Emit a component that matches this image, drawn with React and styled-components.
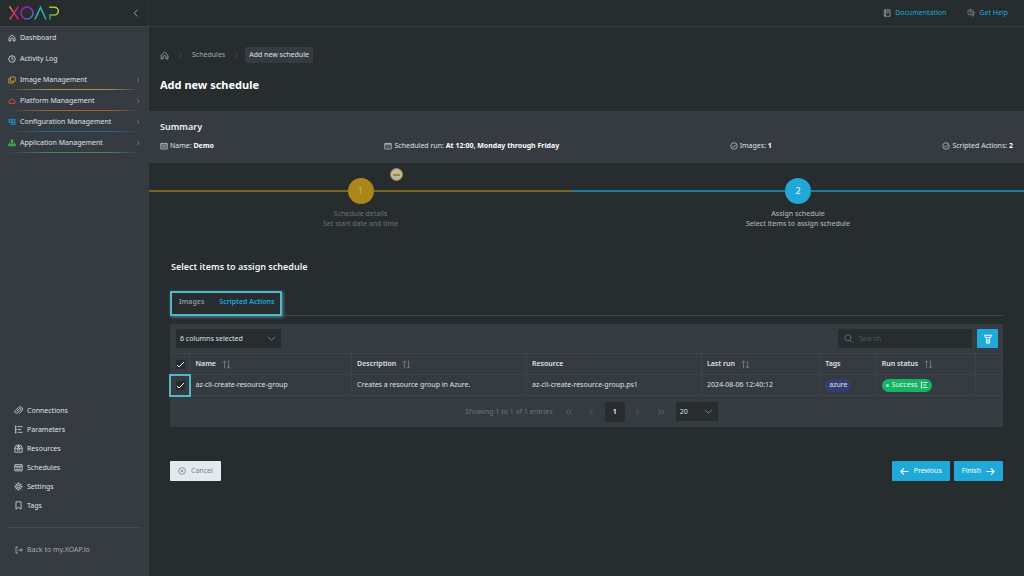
import React from "react";
import styled, { createGlobalStyle } from "styled-components";

const c = {
  bg: "#272c2f",
  panel: "#353b41",
  line: "#3f464c",
  text: "#dee2e6",
  muted: "#8b9298",
  dim: "#6c757d",
  blue: "#20a8d8",
  gold: "#ab8618",
  ring: "#4fb9c9",
};

const GlobalStyle = createGlobalStyle`
  * { box-sizing: border-box; }
  body {
    margin: 0;
    background: ${c.bg};
    color: ${c.text};
    font: 7px/10px "Noto Sans", "Open Sans", sans-serif;
  }
  button, input, select { font: inherit; color: inherit; border: 0; margin: 0; }
  button { cursor: pointer; }
  a { color: inherit; text-decoration: none; }
  svg { display: block; flex: none; }
`;

const Layout = styled.div`
  display: grid;
  grid-template-columns: 149px minmax(0, 1fr);
  min-height: 100vh;
`;

const Sidebar = styled.aside`
  display: flex;
  flex-direction: column;
  background: ${c.panel};
`;

const Brand = styled.div`
  display: flex;
  align-items: center;
  justify-content: space-between;
  height: 27px;
  padding: 0 9px;
  background: ${c.bg};
  border-bottom: 1px solid ${c.line};
  border-right: 1px solid #30353a;
`;

const IconButton = styled.button`
  display: grid;
  place-items: center;
  width: 8px;
  padding: 0;
  background: none;
  color: #7f9fb0;
`;

const Nav = styled.nav`
  display: flex;
  flex-direction: column;
  padding: 0 8px;
`;

const NavLink = styled.a`
  position: relative;
  display: flex;
  align-items: center;
  gap: 4px;
  height: 21px;
  & > svg:first-child { color: ${(p) => p.$tint || "#ced4da"}; }
  & > svg:last-child { color: #6f8c9c; }
  &::after {
    content: "";
    position: absolute;
    inset: auto 0 0 0;
    height: 1px;
    background: ${(p) =>
      p.$glow ? `linear-gradient(90deg, transparent, ${p.$glow} 30% 75%, transparent)` : "none"};
  }
`;

const NavLabel = styled.span`
  flex: 1;
`;

const LowerNav = styled(Nav)`
  margin-top: auto;
  padding: 0 15px 12px 14px;
`;

const LowerLink = styled.a`
  display: flex;
  align-items: center;
  gap: 4px;
  height: 19px;
  & > svg { color: #ced4da; }
`;

const BackLink = styled.a`
  display: flex;
  align-items: center;
  gap: 4px;
  margin: 0 8px;
  padding: 17px 7px 21px;
  border-top: 1px solid #444c53;
  color: #a3a9af;
`;

const Main = styled.main`
  display: flex;
  flex-direction: column;
`;

const TopBar = styled.header`
  display: flex;
  align-items: center;
  justify-content: flex-end;
  gap: 21px;
  height: 27px;
  padding-right: 16px;
  border-bottom: 1px solid #353b40;
`;

const TopLink = styled.a`
  display: flex;
  align-items: center;
  gap: 4px;
  color: ${c.blue};
  & > svg { color: #8b9298; }
`;

const Intro = styled.div`
  padding: 20px 11px 18px;
`;

const Crumbs = styled.nav`
  display: flex;
  align-items: center;
  gap: 9px;
  height: 16px;
  color: #a3a9af;
  & > svg { color: #5c646b; }
`;

const CrumbHere = styled.span`
  padding: 3px 4px;
  margin-left: -3px;
  border-radius: 2px;
  background: ${c.panel};
  color: ${c.text};
`;

const PageTitle = styled.h1`
  margin: 14px 0 0;
  font-size: 11px;
  line-height: 16px;
  color: #fff;
`;

const Summary = styled.section`
  padding: 9px 11px 12px;
  background: ${c.panel};
`;

const SummaryTitle = styled.h2`
  margin: 0;
  font-size: 9px;
  line-height: 14px;
  font-weight: 600;
  color: #f1f3f5;
`;

const SummaryRow = styled.div`
  display: flex;
  justify-content: space-between;
  margin-top: 7px;
`;

const SummaryItem = styled.div`
  display: flex;
  align-items: center;
  gap: 2px;
  & > svg { color: #c3c8cd; }
  b { color: #fff; }
`;

const Steps = styled.ol`
  display: grid;
  grid-template-columns: 423fr 452fr;
  margin: 0;
  padding: 15px 0 0;
  list-style: none;
`;

const Step = styled.li`
  position: relative;
  text-align: center;
  color: ${(p) => (p.$active ? "#a9b0b6" : "#6b7278")};
  font-weight: ${(p) => (p.$active ? 500 : 400)};
`;

const StepTrack = styled.div`
  display: flex;
  align-items: center;
  margin-bottom: 5px;
  &::before, &::after {
    content: "";
    flex: 1;
    height: 2px;
    background: ${(p) => (p.$active ? "#207898" : "#79621d")};
  }
`;

const StepCircle = styled.button`
  width: 26px;
  height: 26px;
  padding: 0;
  border-radius: 50%;
  background: ${(p) => (p.$active ? c.blue : c.gold)};
  color: ${(p) => (p.$active ? "#e3f4fa" : "#c9b77c")};
  font-size: 9px;
`;

const StepBadge = styled.span`
  position: absolute;
  top: -10px;
  left: calc(50% + 29px);
  display: grid;
  place-items: center;
  width: 13px;
  height: 13px;
  border: 1px solid ${c.gold};
  border-radius: 50%;
  background: #b9b7b3;
  &::after {
    content: "";
    width: 7px;
    height: 2px;
    background: ${c.gold};
  }
`;

const Content = styled.section`
  padding: 31px 21px 20px;
`;

const SectionTitle = styled.h2`
  margin: 0 0 17px;
  padding-left: 1px;
  font-size: 9px;
  line-height: 14px;
  font-weight: 600;
  color: #f1f3f5;
`;

const Tabs = styled.div`
  display: flex;
  border-bottom: 1px solid ${c.line};
`;

const TabGroup = styled.div`
  display: flex;
  gap: 15px;
  height: 25px;
  margin-bottom: -1px;
  padding: 0 5px 0 7px;
  border: 2px solid ${c.ring};
  box-shadow: 1px 1px 3px #5c8b93;
`;

const Tab = styled.button`
  padding: 0 0 4px;
  background: none;
  font-weight: 600;
  white-space: nowrap;
  color: ${(p) => (p.$active ? c.blue : "#8f969c")};
`;

const Card = styled.div`
  margin-top: 8px;
  background: ${c.panel};
`;

const Toolbar = styled.div`
  display: flex;
  align-items: center;
  gap: 5px;
  height: 29px;
  padding: 0 5px 0 6px;
`;

const SelectBox = styled.label`
  position: relative;
  display: block;
  width: ${(p) => p.$width};
  margin-right: ${(p) => (p.$push ? "auto" : 0)};
  select {
    display: block;
    appearance: none;
    width: 100%;
    height: 19px;
    padding: 0 4px;
    border-radius: 1px;
    background: ${c.bg};
  }
  svg {
    position: absolute;
    top: 5px;
    right: 5px;
    color: #8a9299;
    pointer-events: none;
  }
`;

const SearchBox = styled.label`
  display: flex;
  align-items: center;
  gap: 6px;
  width: 134px;
  height: 19px;
  padding: 0 6px;
  border-radius: 1px;
  background: ${c.bg};
  color: #6a7177;
  input {
    flex: 1;
    min-width: 0;
    padding: 0;
    background: none;
    outline: 0;
  }
  input::placeholder { color: #50575d; opacity: 1; }
`;

const FilterButton = styled.button`
  display: grid;
  place-items: center;
  width: 21px;
  height: 19px;
  padding: 0;
  border-radius: 1px;
  background: ${c.blue};
  color: #fff;
`;

const Table = styled.table`
  width: 100%;
  table-layout: fixed;
  border-collapse: collapse;
  th, td {
    height: 21px;
    padding: 0 0 0 5px;
    border: 1px solid #3d444a;
    border-width: 1px 0 1px 1px;
    text-align: left;
    white-space: nowrap;
  }
  th { font-weight: 600; }
  th:first-child, td:first-child { border-left: 0; padding-left: 6px; }
`;

const HeadLabel = styled.span`
  display: flex;
  align-items: center;
  gap: 6px;
  & > svg { color: #7b838a; }
`;

const TickCell = styled.td`
  outline: ${(p) => (p.$ringed ? `2px solid ${c.ring}` : "none")};
  outline-offset: -1px;
`;

const Tick = styled.input.attrs({ type: "checkbox" })`
  appearance: none;
  display: block;
  width: 9px;
  height: 9px;
  margin: 0;
  background: ${c.bg} url("data:image/svg+xml,%3Csvg xmlns='http://www.w3.org/2000/svg' viewBox='0 0 9 9'%3E%3Cpath d='M1 5l2 2 5-5' fill='none' stroke='%23fff'/%3E%3C/svg%3E");
`;

const Pill = styled.span`
  display: inline-flex;
  align-items: center;
  gap: 3px;
  height: 13px;
  padding: 0 4px;
  border-radius: 7px;
  background: ${(p) => p.$fill};
  color: ${(p) => p.$ink || c.text};
  vertical-align: middle;
`;

const Dot = styled.i`
  width: 3px;
  height: 3px;
  border-radius: 50%;
  background: #a9efcd;
`;

const Pager = styled.div`
  display: flex;
  align-items: center;
  justify-content: center;
  gap: 3px;
  height: 31px;
  padding-left: 10px;
`;

const PagerText = styled.span`
  margin-right: 3px;
  color: ${c.dim};
`;

const PageButton = styled.button`
  display: grid;
  place-items: center;
  width: 20px;
  height: 20px;
  padding: 0;
  border-radius: 1px;
  background: ${(p) => (p.$active ? c.bg : "none")};
  color: ${(p) => (p.$active ? "#fff" : c.dim)};
  font-weight: 600;
`;

const PageSize = styled.div`
  padding-left: 2px;
`;

const Actions = styled.footer`
  display: flex;
  gap: 4px;
  margin-top: 34px;
`;

const ActionButton = styled.button`
  display: flex;
  align-items: center;
  gap: 5px;
  height: 20px;
  padding: 0 8px;
  border-radius: 1px;
  margin-right: ${(p) => (p.$plain ? "auto" : 0)};
  background: ${(p) => (p.$plain ? "#e4e9ed" : c.blue)};
  color: ${(p) => (p.$plain ? "#73828c" : "#fff")};
`;

const glyphs = {
  home: <path d="M2 7.500 8 2l6 5.500V14h-3.500v-3.500a2.500 2.500 0 0 0-5 0V14H2z" />,
  clock: <><circle cx="8" cy="8" r="6.500" /><path d="M8 3.500V8l3 1.500" /></>,
  images: <><path d="M5 2h9.500v8.500H5z" /><path d="M5 5.500H1.500V14h9v-3.500" /></>,
  cloud: <path d="M4.500 13a3 3 0 0 1-.5-6 4.200 4.200 0 0 1 8.200.500A2.800 2.800 0 0 1 12 13z" />,
  grid: (
    <path
      stroke="none"
      fill="currentColor"
      d="M1 2h4v3.500H1zM6 2h4v3.500H6zM11 2h4v3.500h-4zM1 6.500h4V10H1zM6 6.500h4V10H6zM11 6.500h4V10h-4zM6 11h4v3H6zM11 11h4v3h-4z"
    />
  ),
  tree: (
    <path
      stroke="none"
      fill="currentColor"
      d="M5.500 1h5v4.500H9V7h5v3h1.500v4.500H11V10h1.500V8.500H9V10h1.500v4.500h-5V10H7V8.500H3.500V10H5v4.500H.5V10H2V7h5V5.500H5.500z"
    />
  ),
  clip: (
    <path d="M5 9.500 10 4.500a1.400 1.400 0 0 1 2 2L6.500 12a2.800 2.800 0 0 1-4-4L8 2.500a4.100 4.100 0 0 1 6 6L9 13.500" />
  ),
  params: <path d="M3 1v14M1.500 3h3M1.500 8h3M1.500 13h3M6.500 3H15M6.500 8h6M6.500 13H15" />,
  box: <><path d="M1.500 7 4 2h8l2.500 5v7.500h-13z" /><path d="M1.500 7.500h13M6 7.500V11h4V7.500M8 2v5M5 4.500h6" /></>,
  calendar: <><path d="M1.500 3h13v11h-13zM1.500 6h13" /><path d="M4 1.500V3M12 1.500V3M3.500 8.500h9M3.500 11.500h9" strokeWidth="1.200" /></>,
  calendarCheck: <><path d="M1.500 3h13v11h-13zM1.500 5.500h13M5 9l2.200 2L11 7.500" /><path d="M4.500 1v2M11.500 1v2" /></>,
  gear: <><circle cx="8" cy="8" r="2.300" /><circle cx="8" cy="8" r="5" /><path d="M8 .8v2.500M8 12.700v2.500M.8 8h2.500M12.700 8h2.500M2.900 2.900l1.800 1.800M11.300 11.300l1.800 1.800M13.100 2.900l-1.800 1.800M4.700 11.300l-1.800 1.800" /></>,
  bookmark: <path d="M3.500 1.500h9v13L8 11l-4.500 3.500z" />,
  exit: <path d="M6 2H2v12h4M5.500 8H15M11.500 4.500 15 8l-3.500 3.500" />,
  checkCircle: <><circle cx="8" cy="8" r="6.500" /><path d="m4.800 8 2.400 2.500L12.500 5" /></>,
  xCircle: <><circle cx="8" cy="8" r="6.800" /><path d="m5.300 5.300 5.400 5.400M10.700 5.300l-5.400 5.400" /></>,
  book: <><path d="M2.500 1.500H14v13H2.500zM5 1.500v13" /><path d="M7 5h4.500M7 8h4.500" /></>,
  help: <><circle cx="7" cy="6.500" r="5.500" /><path d="M5.300 5.500A1.700 1.700 0 1 1 7 7.300V8M7 9.200v1" /><path d="M14 5v5.500l-1.500 1v3L9.500 12.500" /></>,
  search: <><circle cx="7" cy="7" r="5.500" /><path d="m11 11 4 4" /></>,
  funnel: <path d="M2 2h12l-3.500 5.500v7h-5v-7zM4.500 5.500h7M8 8v6" />,
  left: <path d="M10.500 2.500 5 8l5.500 5.500" />,
  right: <path d="M5.500 2.500 11 8l-5.500 5.500" />,
  down: <path d="m1.500 5 6.500 6 6.500-6" />,
  first: <path d="M7.500 3 2.500 8l5 5M13.500 3l-5 5 5 5" />,
  last: <path d="m2.500 3 5 5-5 5M8.500 3l5 5-5 5" />,
  arrowLeft: <path d="M15 8H1.500M7 2.500 1.500 8 7 13.500" />,
  arrowRight: <path d="M1 8h13.500M9 2.500 14.500 8 9 13.500" />,
  sort: <path d="M4.500 15V1.500M1.500 4.500l3-3 3 3M11.500 1v13.500M8.500 11.500l3 3 3-3" />,
};

function Icon({ name, size = 8, weight = 1.5 }) {
  return (
    <svg
      width={size}
      height={size}
      viewBox="0 0 16 16"
      fill="none"
      stroke="currentColor"
      strokeWidth={weight}
      aria-hidden="true"
    >
      {glyphs[name]}
    </svg>
  );
}

function Logo() {
  return (
    <svg width="51" height="14" viewBox="0 0 51 14" fill="none" strokeWidth="1.500" role="img" aria-label="XOAP">
      <defs>
        <linearGradient id="lx" x1="0" y1="0" x2="1" y2="0">
          <stop stopColor="#e6452d" /><stop offset="1" stopColor="#b01fa0" />
        </linearGradient>
        <linearGradient id="lx2" x1="0" y1="0" x2="1" y2="1">
          <stop stopColor="#e8a02a" /><stop offset=".5" stopColor="#d92a55" /><stop offset="1" stopColor="#d0218c" />
        </linearGradient>
        <linearGradient id="lo" x1="0" y1="0" x2="1" y2="1">
          <stop stopColor="#c314b4" /><stop offset=".5" stopColor="#a01fc4" /><stop offset="1" stopColor="#2f8ad0" />
        </linearGradient>
        <linearGradient id="la" x1="0" y1="0" x2="1" y2="1">
          <stop stopColor="#33b6c6" /><stop offset="1" stopColor="#2cb58a" />
        </linearGradient>
        <linearGradient id="lp" x1="0" y1="1" x2="1" y2="0">
          <stop stopColor="#25a04a" /><stop offset="1" stopColor="#c4d82e" />
        </linearGradient>
      </defs>
      <path d="M9.500 .5l-9 13" stroke="url(#lx)" />
      <path d="M.5 .5l9 13" stroke="url(#lx2)" />
      <circle cx="18" cy="7" r="6" stroke="url(#lo)" />
      <path d="M26 13.500L31.500 1.500l5.500 12" stroke="url(#la)" />
      <path d="M40 1.300h5.500a3.700 3.700 0 0 1 0 7.700H41v4.500" stroke="url(#lp)" />
    </svg>
  );
}

const modules = [
  { label: "Dashboard", icon: "home" },
  { label: "Activity Log", icon: "clock" },
  { label: "Image Management", icon: "images", tint: "#c79a2b", glow: "#a8963a", more: true },
  { label: "Platform Management", icon: "cloud", tint: "#cf5a2c", glow: "#a3672c", more: true },
  { label: "Configuration Management", icon: "grid", tint: "#1d8fd1", glow: "#2a6a94", more: true },
  { label: "Application Management", icon: "tree", tint: "#3fae49", glow: "#3f8b58", more: true },
];

const tools = [
  ["Connections", "clip"],
  ["Parameters", "params"],
  ["Resources", "box"],
  ["Schedules", "calendar"],
  ["Settings", "gear"],
  ["Tags", "bookmark"],
];

const columns = [
  ["Name", "19.4%", true],
  ["Description", "21%", true],
  ["Resource", "21%", false],
  ["Last run", "14.2%", true],
  ["Tags", "6.8%", false],
  ["Run status", "11.9%", true],
  ["", "3.3%", false],
];

export default function App() {
  return (
    <>
      <GlobalStyle />
      <Layout>
        <Sidebar>
          <Brand>
            <Logo />
            <IconButton aria-label="Collapse menu"><Icon name="left" size={10} /></IconButton>
          </Brand>
          <Nav aria-label="Modules">
            {modules.map((m) => (
              <NavLink key={m.label} href="#" $tint={m.tint} $glow={m.glow}>
                <Icon name={m.icon} weight={1.8} />
                <NavLabel>{m.label}</NavLabel>
                {m.more && <Icon name="right" size={6} weight={2} />}
              </NavLink>
            ))}
          </Nav>
          <LowerNav aria-label="Tools">
            {tools.map(([label, icon]) => (
              <LowerLink key={label} href="#"><Icon name={icon} size={9} />{label}</LowerLink>
            ))}
          </LowerNav>
          <BackLink href="#"><Icon name="exit" weight={1.8} />Back to my.XOAP.io</BackLink>
        </Sidebar>

        <Main>
          <TopBar>
            <TopLink href="#"><Icon name="book" weight={1.8} />Documentation</TopLink>
            <TopLink href="#"><Icon name="help" />Get Help</TopLink>
          </TopBar>

          <Intro>
            <Crumbs aria-label="Breadcrumb">
              <a href="#" aria-label="Home"><Icon name="home" size={9} /></a>
              <Icon name="right" size={5} weight={2} />
              <a href="#">Schedules</a>
              <Icon name="right" size={5} weight={2} />
              <CrumbHere>Add new schedule</CrumbHere>
            </Crumbs>
            <PageTitle>Add new schedule</PageTitle>
          </Intro>

          <Summary>
            <SummaryTitle>Summary</SummaryTitle>
            <SummaryRow>
              <SummaryItem><Icon name="calendar" /><span>Name: <b>Demo</b></span></SummaryItem>
              <SummaryItem><Icon name="calendarCheck" /><span>Scheduled run: <b>At 12:00, Monday through Friday</b></span></SummaryItem>
              <SummaryItem><Icon name="checkCircle" /><span>Images: <b>1</b></span></SummaryItem>
              <SummaryItem><Icon name="checkCircle" /><span>Scripted Actions: <b>2</b></span></SummaryItem>
            </SummaryRow>
          </Summary>

          <Steps>
            <Step>
              <StepTrack><StepCircle>1</StepCircle></StepTrack>
              <StepBadge />
              <div>Schedule details</div>
              <div>Set start date and time</div>
            </Step>
            <Step $active>
              <StepTrack $active><StepCircle $active>2</StepCircle></StepTrack>
              <div>Assign schedule</div>
              <div>Select items to assign schedule</div>
            </Step>
          </Steps>

          <Content>
            <SectionTitle>Select items to assign schedule</SectionTitle>
            <Tabs>
              <TabGroup role="tablist">
                <Tab role="tab" aria-selected="false">Images</Tab>
                <Tab role="tab" aria-selected="true" $active>Scripted Actions</Tab>
              </TabGroup>
            </Tabs>

            <Card>
              <Toolbar>
                <SelectBox $width="105px" $push>
                  <select aria-label="Visible columns"><option>6 columns selected</option></select>
                  <Icon name="down" size={9} />
                </SelectBox>
                <SearchBox>
                  <Icon name="search" size={9} />
                  <input type="text" placeholder="Search" aria-label="Search" />
                </SearchBox>
                <FilterButton aria-label="Filter"><Icon name="funnel" size={10} /></FilterButton>
              </Toolbar>

              <Table>
                <colgroup>
                  <col style={{ width: "2.4%" }} />
                  {columns.map(([label, width]) => <col key={label} style={{ width }} />)}
                </colgroup>
                <thead>
                  <tr>
                    <th><Tick defaultChecked aria-label="Select all rows" /></th>
                    {columns.map(([label, , sortable]) => (
                      <th key={label}>
                        <HeadLabel>{label}{sortable && <Icon name="sort" size={9} />}</HeadLabel>
                      </th>
                    ))}
                  </tr>
                </thead>
                <tbody>
                  <tr>
                    <TickCell $ringed><Tick defaultChecked aria-label="Select az-cli-create-resource-group" /></TickCell>
                    <td>az-cli-create-resource-group</td>
                    <td>Creates a resource group in Azure.</td>
                    <td>az-cli-create-resource-group.ps1</td>
                    <td>2024-08-06 12:40:12</td>
                    <td><Pill $fill="#343c73">azure</Pill></td>
                    <td><Pill $fill="#16b364" $ink="#e3fbef"><Dot />Success<Icon name="params" weight={2} /></Pill></td>
                    <td />
                  </tr>
                </tbody>
              </Table>

              <Pager>
                <PagerText>Showing 1 to 1 of 1 entries</PagerText>
                <PageButton aria-label="First page"><Icon name="first" /></PageButton>
                <PageButton aria-label="Previous page"><Icon name="left" size={7} /></PageButton>
                <PageButton $active>1</PageButton>
                <PageButton aria-label="Next page"><Icon name="right" size={7} /></PageButton>
                <PageButton aria-label="Last page"><Icon name="last" /></PageButton>
                <PageSize>
                  <SelectBox $width="42px">
                    <select aria-label="Rows per page"><option>20</option></select>
                    <Icon name="down" size={9} />
                  </SelectBox>
                </PageSize>
              </Pager>
            </Card>

            <Actions>
              <ActionButton $plain><Icon name="xCircle" />Cancel</ActionButton>
              <ActionButton><Icon name="arrowLeft" size={9} weight={2} />Previous</ActionButton>
              <ActionButton>Finish<Icon name="arrowRight" size={9} weight={2} /></ActionButton>
            </Actions>
          </Content>
        </Main>
      </Layout>
    </>
  );
}
